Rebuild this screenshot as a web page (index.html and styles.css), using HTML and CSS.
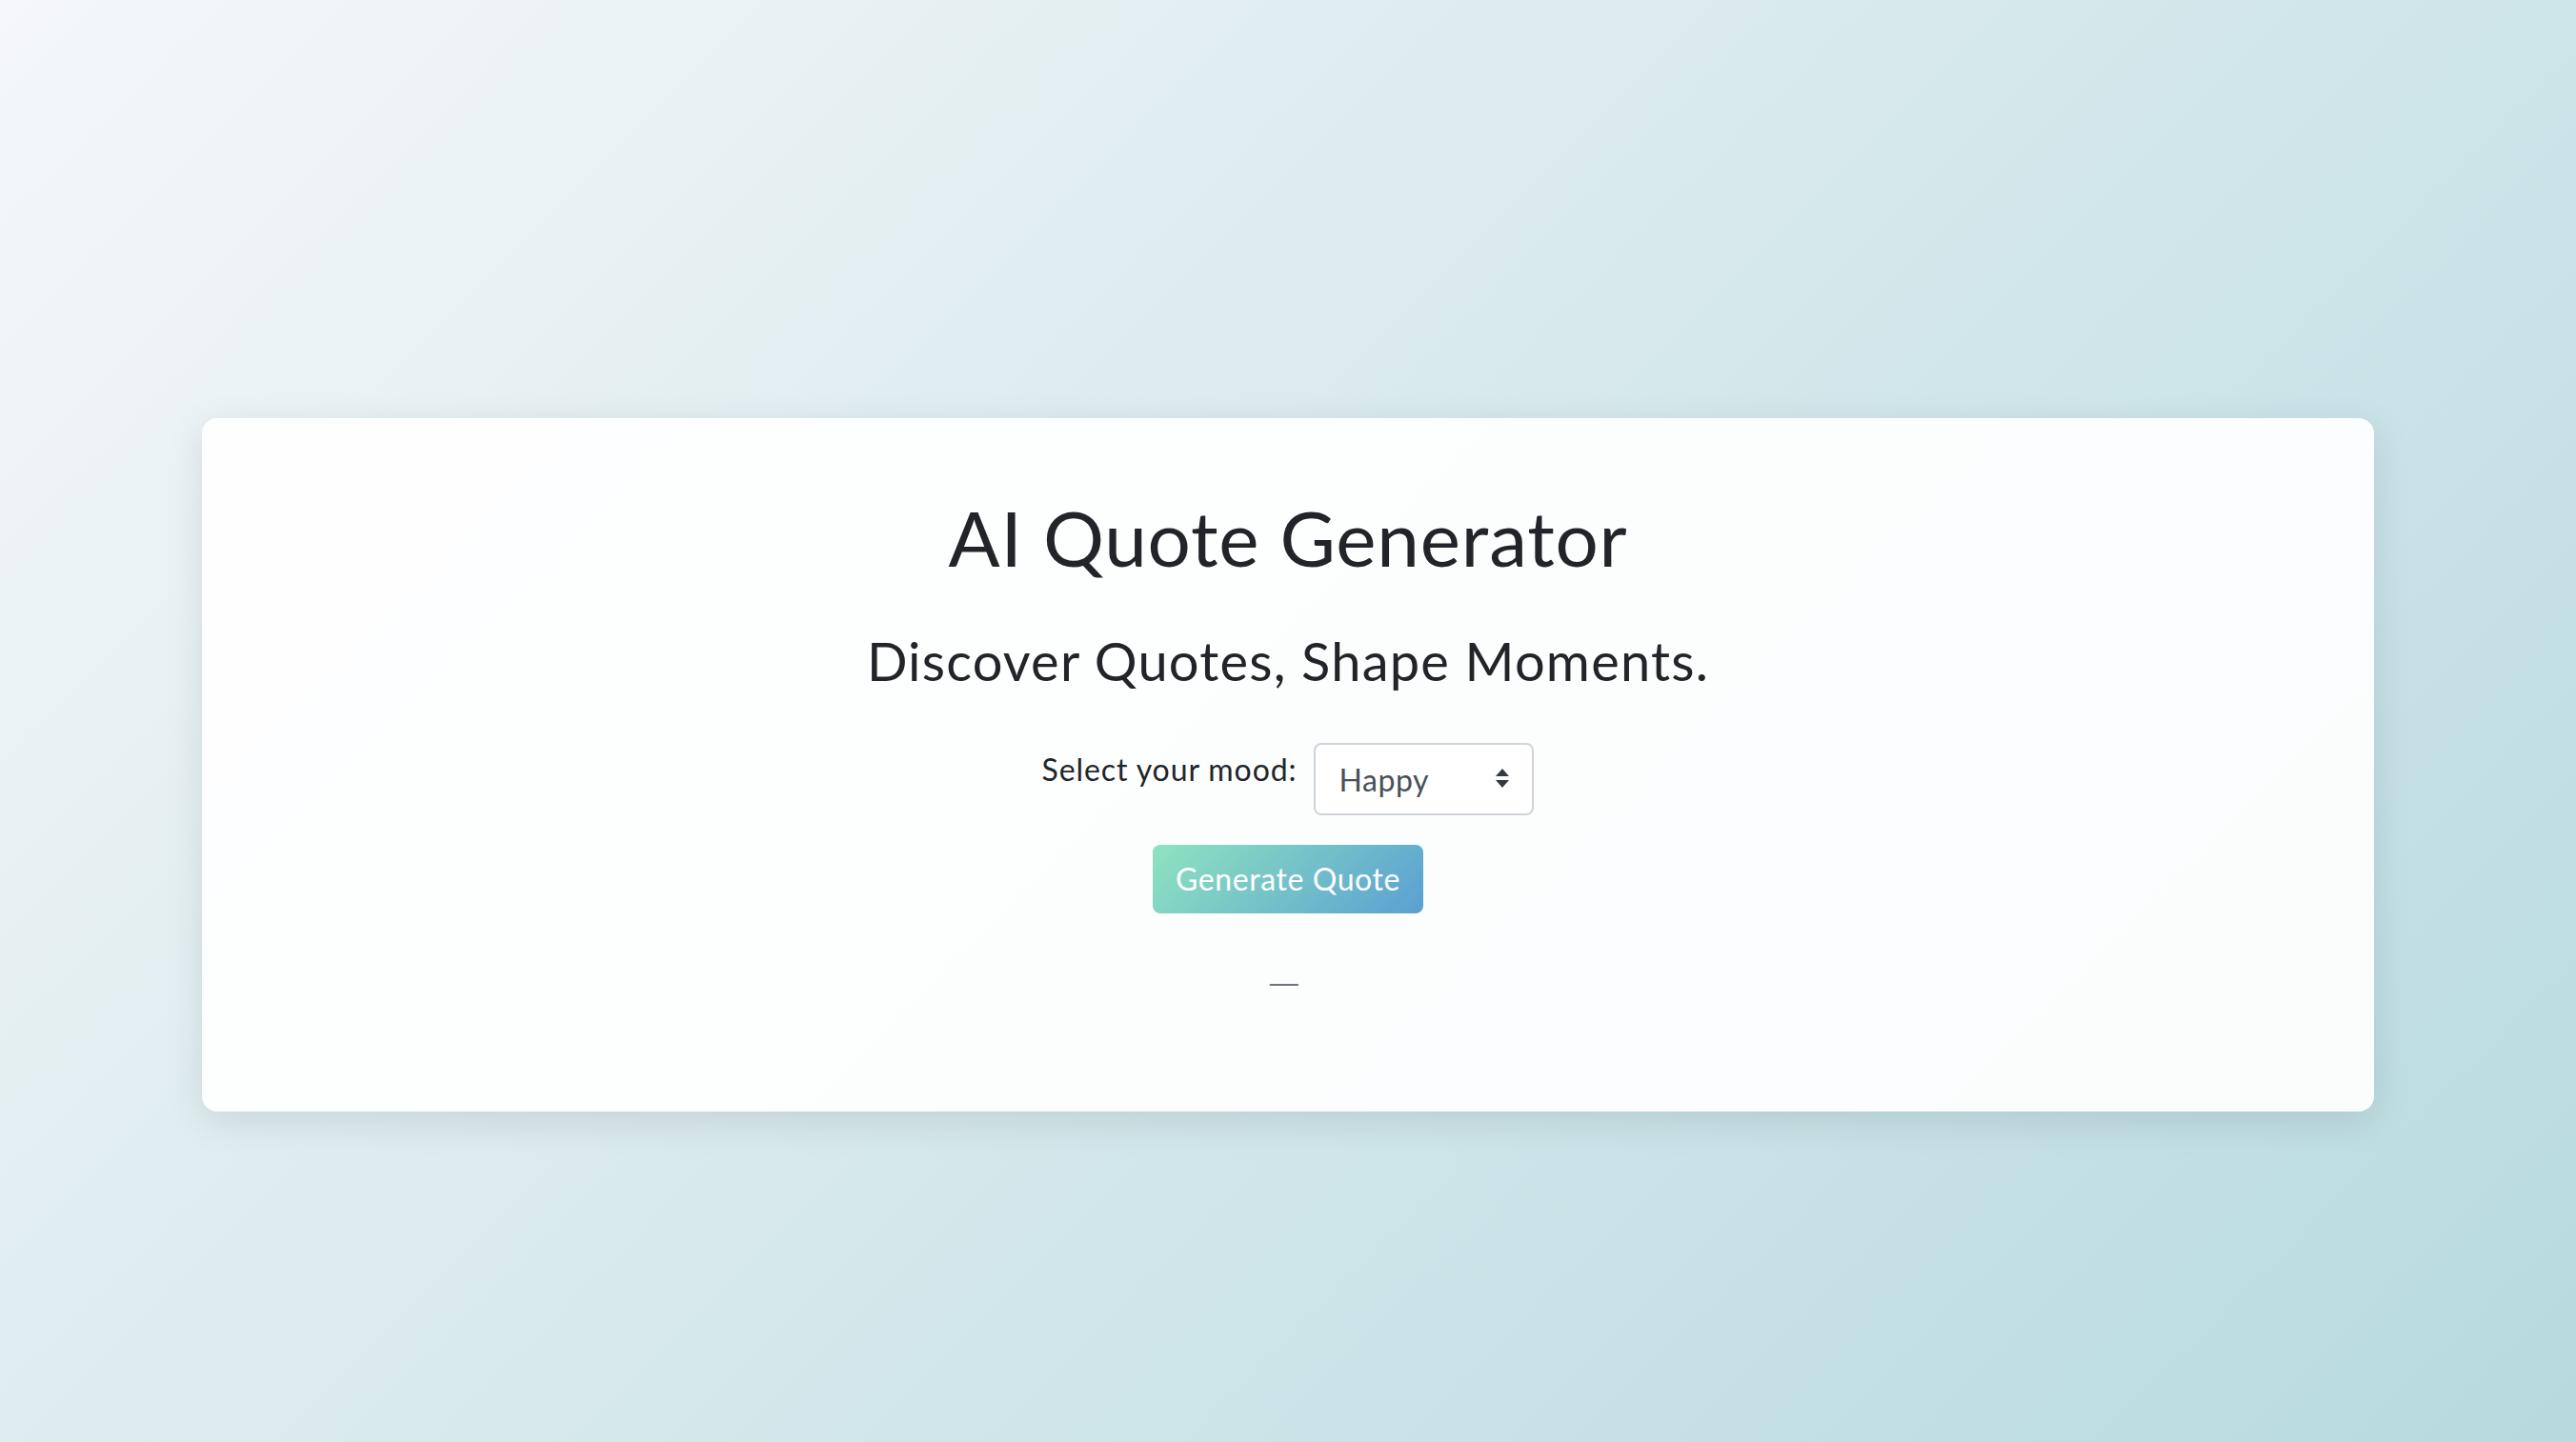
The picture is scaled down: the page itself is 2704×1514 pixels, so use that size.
FILE: index.html
```html
<!DOCTYPE html>
<html lang="en">
<head>
<meta charset="utf-8">
<title>AI Quote Generator</title>
<link rel="stylesheet" href="styles.css">
</head>
<body>
<div class="page">
  <div class="card">
    <h1 class="title">AI Quote Generator</h1>
    <h2 class="subtitle">Discover Quotes, Shape Moments.</h2>
    <div class="mood-row">
      <label class="mood-label" for="mood">Select your mood:</label>
      <div class="select-wrap">
        <select id="mood" class="mood-select">
          <option>Happy</option>
          <option>Sad</option>
          <option>Motivated</option>
          <option>Romantic</option>
        </select>
        <svg class="select-arrows" width="16" height="20" viewBox="0 0 16 20" aria-hidden="true">
          <path d="M8 0 L15 8 L1 8 Z" fill="#343a40"/>
          <path d="M1 12 L15 12 L8 20 Z" fill="#343a40"/>
        </svg>
      </div>
    </div>
    <button class="gen-btn" type="button">Generate Quote</button>
    <div class="quote">
      <p class="quote-text"></p>
      <div class="quote-author">—&nbsp;</div>
    </div>
  </div>
</div>
</body>
</html>
```

FILE: styles.css
```css
html, body {
  margin: 0;
  padding: 0;
}

body {
  min-height: 100vh;
  background: linear-gradient(135deg, #f5f7fa 0%, #b7dadf 100%);
  font-family: "Lato", "Open Sans", sans-serif;
  color: #212529;
}

.page {
  padding-top: 439px;
  padding-bottom: 347px;
}

.card {
  box-sizing: border-box;
  width: 2280px;
  height: 728px;
  margin: 0 auto;
  padding-top: 77px;
  display: flex;
  flex-direction: column;
  align-items: center;
  background: rgba(255, 255, 255, 0.93);
  border-radius: 16px;
  box-shadow: 0 10px 40px rgba(0, 0, 0, 0.1);
}

.title {
  margin: 0;
  font-size: 80px;
  line-height: 1.2;
  font-weight: 400;
  letter-spacing: 0.8px;
  color: #212529;
}

.subtitle {
  margin: 48px 0 0;
  font-size: 56px;
  line-height: 1.2;
  font-weight: 400;
  letter-spacing: 1.2px;
  color: #212529;
}

.mood-row {
  margin-top: 53px;
  display: flex;
  align-items: flex-start;
  gap: 18px;
}

.mood-label {
  margin-top: 4px;
  font-size: 32px;
  line-height: 1.5;
  letter-spacing: 0.9px;
  color: #212529;
}

.select-wrap {
  position: relative;
}

.mood-select {
  box-sizing: border-box;
  width: 231px;
  height: 76px;
  padding: 0 24px;
  border: 2px solid #ced4da;
  border-radius: 8px;
  background: #ffffff;
  font-family: "Lato", "Open Sans", sans-serif;
  font-size: 32px;
  letter-spacing: 0.6px;
  color: #495057;
  -webkit-appearance: none;
  appearance: none;
  outline: none;
}

.select-arrows {
  position: absolute;
  right: 25px;
  top: 27px;
  pointer-events: none;
}

.gen-btn {
  margin-top: 31px;
  padding: 12px 24px;
  border: 0;
  border-radius: 8px;
  background: linear-gradient(135deg, #8fe3bf 0%, #5aa0d2 100%);
  color: #ffffff;
  font-family: "Lato", "Open Sans", sans-serif;
  font-size: 32px;
  line-height: 1.5;
  letter-spacing: 0.6px;
  cursor: pointer;
}

.quote {
  display: flex;
  flex-direction: column;
  align-items: center;
}

.quote-text {
  margin: 0;
}

.quote-author {
  margin-top: 50px;
  font-family: "Liberation Sans", Arial, sans-serif;
  font-size: 30px;
  line-height: 1.5;
  color: #6c757d;
}
```
